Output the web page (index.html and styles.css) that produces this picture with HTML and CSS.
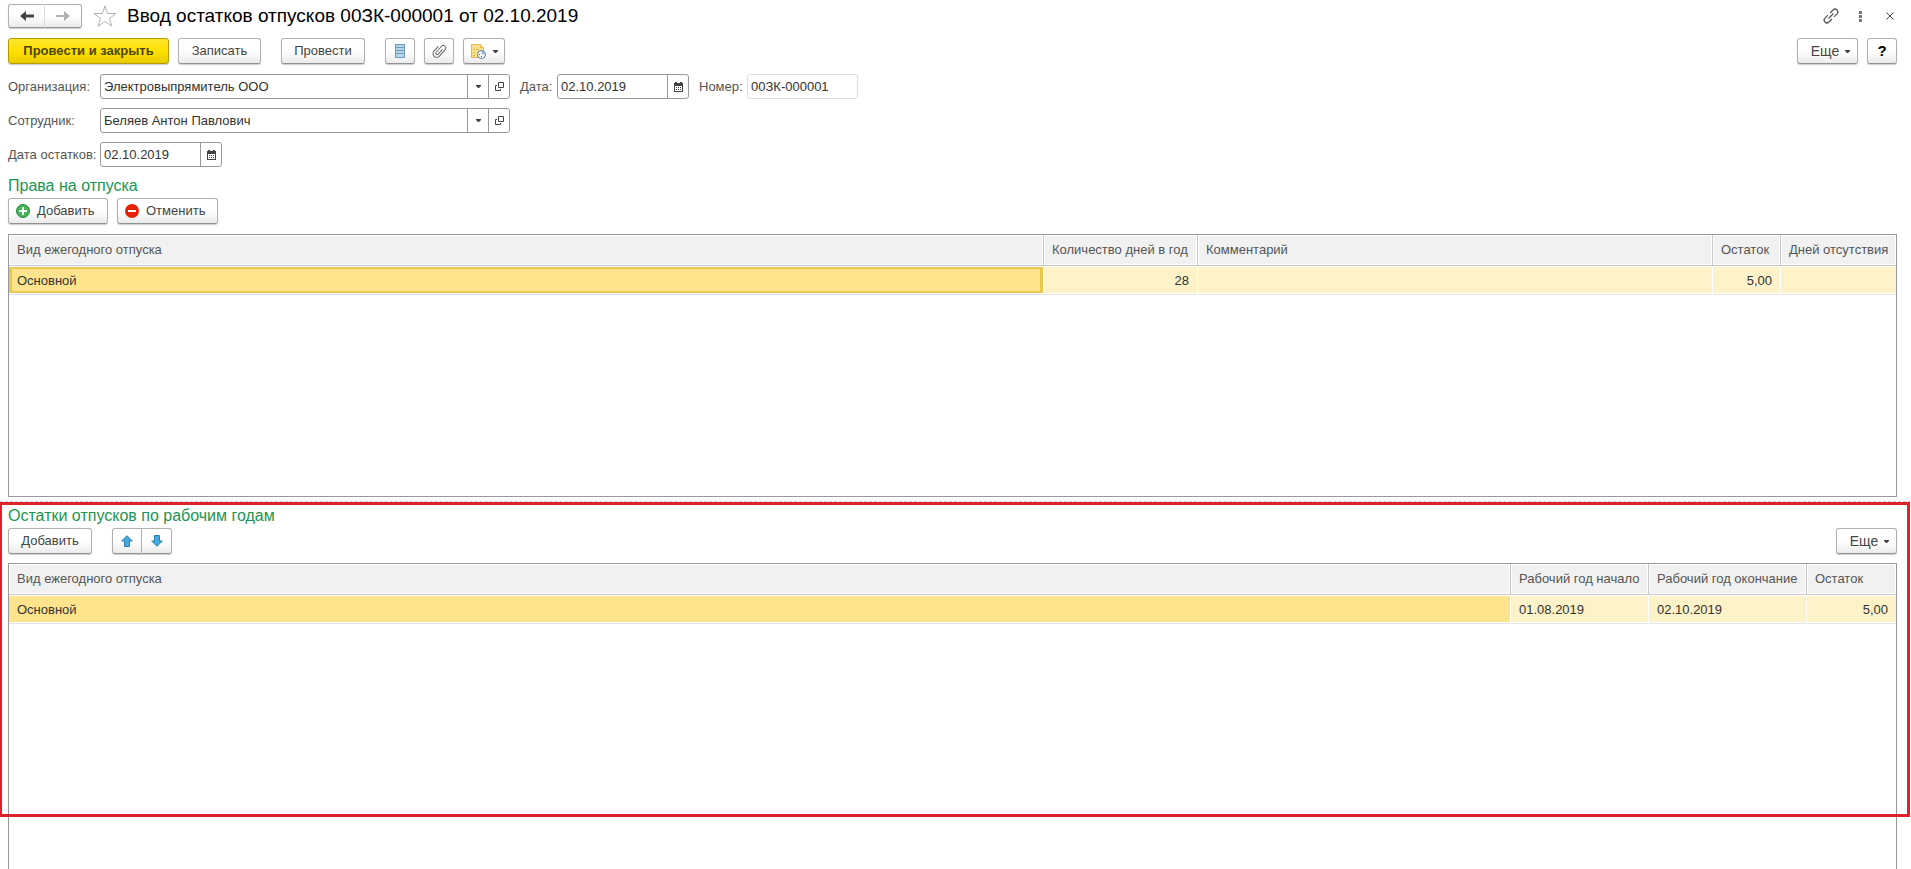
FILE: index.html
```html
<!DOCTYPE html>
<html lang="ru">
<head>
<meta charset="utf-8">
<title>Ввод остатков отпусков</title>
<link rel="stylesheet" href="styles.css">
</head>
<body>
<svg class="defs" aria-hidden="true">
  <symbol id="calendar" viewBox="0 0 9 10"><path d="M0 1h9v9H0z" fill="#444"/><path d="M1 4h7v5H1z" fill="#fff"/><path d="M1 0h2v2H1zM6 0h2v2H6z" fill="#444"/><path d="M2 5h1v1H2zM4 5h1v1H4zM6 5h1v1H6zM2 7h1v1H2zM4 7h1v1H4zM6 7h1v1H6z" fill="#444"/></symbol>
  <symbol id="open" viewBox="0 0 9 9"><path d="M3.500 .5h5v5h-5zM2 3.500H.5v5h5V7" fill="none" stroke="#444"/></symbol>
  <symbol id="caret" viewBox="0 0 5 3"><path d="M0 0h5v1L3 3H2L0 1z" fill="#444"/></symbol>
</svg>

<header class="titlebar">
  <div class="group">
    <button class="btn nav" aria-label="Назад"><svg width="14" height="10" viewBox="0 0 14 10"><path d="M6 0L0 5l6 5V6.500h8v-3H6z" fill="#444"/></svg></button>
    <button class="btn nav" aria-label="Вперед"><svg width="14" height="10" viewBox="0 0 14 10"><path d="M8 0l6 5-6 5V6H0V4h8z" fill="#b0b0b0"/></svg></button>
  </div>
  <button class="plain star" aria-label="Избранное"><svg width="24" height="22" viewBox="0 0 24 22"><path d="M12 1l2.700 7.500H23l-6.600 5 2.500 7.700-6.900-4.700-6.900 4.700 2.500-7.700L1 8.500h8.300z" fill="#fff" stroke="#aeb3b8"/></svg></button>
  <h1>Ввод остатков отпусков 00ЗК-000001 от 02.10.2019</h1>
  <div class="window-tools">
    <button class="plain" aria-label="Ссылка"><svg width="16" height="16" viewBox="0 0 16 16"><g transform="rotate(-45 8 8)" fill="none" stroke="#555" stroke-width="1.200"><path d="M6.500 5.200H2.300a2.800 2.800 0 0 0 0 5.600h4.200M9.500 5.200h4.200a2.800 2.800 0 0 1 0 5.600H9.500M4.500 8h7"/></g></svg></button>
    <button class="plain" aria-label="Меню"><svg width="3" height="11" viewBox="0 0 3 11"><path d="M0 0h3v3H0zM0 4h3v3H0zM0 8h3v3H0z" fill="#777"/></svg></button>
    <button class="plain" aria-label="Закрыть"><svg width="8" height="8" viewBox="0 0 8 8"><path d="M.5.5l7 7M7.500.5l-7 7" stroke="#444"/></svg></button>
  </div>
</header>

<div class="toolbar main-tools">
  <button class="btn primary">Провести и закрыть</button>
  <button class="btn save">Записать</button>
  <button class="btn post">Провести</button>
  <button class="btn icon" aria-label="Список"><svg width="10" height="14" viewBox="0 0 10 14"><path d="M0 0h10v14H0z" fill="#6f9ab8"/><path d="M1 1h8v2H1zM1 4h8v2H1zM1 7h8v2H1zM1 10h8v3H1z" fill="#b5d7ec"/></svg></button>
  <button class="btn icon" aria-label="Файлы"><svg width="14" height="14" viewBox="0 0 14 14"><g transform="rotate(42 7 7)" fill="none" stroke="#666"><path d="M8.500 3.500v6.300a1.400 1.400 0 0 1-2.800 0V1.800a2.500 2.500 0 0 1 5 0v8.700a3.700 3.700 0 0 1-7.400 0V4"/></g></svg></button>
  <button class="btn reminder" aria-label="Напоминание">
    <svg width="15" height="15" viewBox="0 0 15 15"><path d="M.5.5h9l3 3v10H.5z" fill="#f8e08c" stroke="#dfb955"/><path d="M9.500.5v3h3" fill="#fff1b5" stroke="#dfb955"/><path d="M2 5.500h2M5 5.500h3M2 8.500h2M2 11.500h2" stroke="#d9b65c"/><circle cx="10.500" cy="10.500" r="4" fill="#fff" stroke="#5f7592"/><path d="M10.500 10.500V7a3.500 3.500 0 0 1 3.500 3.500z" fill="#8dbbe2"/><path d="M8 10.500h1M10.500 12v1" stroke="#555"/></svg>
    <svg width="5" height="3"><use href="#caret"/></svg>
  </button>
  <button class="btn more push">Еще <svg width="5" height="3"><use href="#caret"/></svg></button>
  <button class="btn icon help">?</button>
</div>

<form class="fields">
  <div class="row">
    <label class="first" for="org">Организация:</label>
    <div class="field wide"><input id="org" value="Электровыпрямитель ООО"><button type="button" aria-label="Выбрать"><svg width="5" height="3"><use href="#caret"/></svg></button><button type="button" aria-label="Открыть"><svg width="9" height="9"><use href="#open"/></svg></button></div>
    <label class="date-label" for="date">Дата:</label>
    <div class="field date"><input id="date" value="02.10.2019"><button type="button" aria-label="Календарь"><svg width="9" height="10"><use href="#calendar"/></svg></button></div>
    <label class="number-label" for="number">Номер:</label>
    <div class="field number"><input id="number" value="00ЗК-000001" readonly></div>
  </div>
  <div class="row">
    <label class="first" for="person">Сотрудник:</label>
    <div class="field wide"><input id="person" value="Беляев Антон Павлович"><button type="button" aria-label="Выбрать"><svg width="5" height="3"><use href="#caret"/></svg></button><button type="button" aria-label="Открыть"><svg width="9" height="9"><use href="#open"/></svg></button></div>
  </div>
  <div class="row">
    <label class="first" for="rest">Дата остатков:</label>
    <div class="field rest"><input id="rest" value="02.10.2019"><button type="button" aria-label="Календарь"><svg width="9" height="10"><use href="#calendar"/></svg></button></div>
  </div>
</form>

<section class="rights">
  <h2>Права на отпуска</h2>
  <div class="toolbar">
    <button class="btn add"><svg width="14" height="14" viewBox="0 0 14 14"><circle cx="7" cy="7" r="6.500" fill="#45b45a" stroke="#278b3c"/><path d="M7 3v8M3 7h8" stroke="#fff" stroke-width="2"/></svg>Добавить</button>
    <button class="btn cancel"><svg width="14" height="14" viewBox="0 0 14 14"><circle cx="7" cy="7" r="7" fill="#e52207"/><path d="M3 7h8" stroke="#fff" stroke-width="2"/></svg>Отменить</button>
  </div>
  <div class="grid">
    <table>
      <colgroup><col><col class="c-days"><col class="c-comment"><col class="c-left"><col class="c-absence"></colgroup>
      <thead><tr><th>Вид ежегодного отпуска</th><th>Количество дней в год</th><th>Комментарий</th><th>Остаток</th><th>Дней отсутствия</th></tr></thead>
      <tbody><tr><td class="current focused">Основной</td><td class="num">28</td><td></td><td class="num">5,00</td><td></td></tr></tbody>
    </table>
  </div>
</section>

<section class="years">
  <h2>Остатки отпусков по рабочим годам</h2>
  <div class="toolbar">
    <button class="btn add-year">Добавить</button>
    <div class="group">
      <button class="btn move" aria-label="Вверх"><svg width="12" height="12" viewBox="0 0 12 12"><path d="M6 .7L11.300 6H8.500v5.500h-5V6H.7z" fill="#45a9e2" stroke="#2f7dad"/></svg></button>
      <button class="btn move" aria-label="Вниз"><svg width="12" height="12" viewBox="0 0 12 12"><path d="M6 11.300L.7 6h2.800V.5h5V6h2.800z" fill="#45a9e2" stroke="#2f7dad"/></svg></button>
    </div>
    <button class="btn more push">Еще <svg width="5" height="3"><use href="#caret"/></svg></button>
  </div>
  <div class="grid">
    <table>
      <colgroup><col><col class="c-start"><col class="c-end"><col class="c-rest"></colgroup>
      <thead><tr><th>Вид ежегодного отпуска</th><th>Рабочий год начало</th><th>Рабочий год окончание</th><th>Остаток</th></tr></thead>
      <tbody><tr><td class="current">Основной</td><td>01.08.2019</td><td>02.10.2019</td><td class="num">5,00</td></tr></tbody>
    </table>
  </div>
  <div class="highlight"></div>
</section>
</body>
</html>
```
FILE: styles.css
```css
* { box-sizing: border-box; }
body {
  margin: 0;
  height: 100vh;
  overflow: hidden;
  display: flex;
  flex-direction: column;
  background: #fff;
  color: #333;
  font: 13px/16px "Liberation Sans", Arial, sans-serif;
}
button, input { font: inherit; color: inherit; }
svg { display: block; flex: none; overflow: visible; }
.defs { position: absolute; width: 0; height: 0; }

.titlebar, .main-tools, .fields { padding: 0 14px 0 8px; }
.titlebar { display: flex; align-items: center; height: 32px; }
h1 { margin: 0 0 0 10px; font-size: 19px; line-height: 24px; font-weight: 400; color: #000; }
.plain { display: flex; padding: 0; border: 0; background: none; }
.star { margin-left: 11px; }
.window-tools { display: flex; align-items: center; gap: 20px; margin-left: auto; padding-right: 3px; }
.window-tools .plain:last-child { margin-left: 4px; }

.btn {
  display: flex;
  align-items: center;
  justify-content: center;
  height: 26px;
  padding: 0;
  border: 1px solid #b0b0b0;
  border-bottom-color: #929292;
  border-radius: 3px;
  background: linear-gradient(#fff 50%, #ebebeb);
  box-shadow: 0 1px 1px #ccc;
  color: #444;
  white-space: nowrap;
}
.group { display: flex; }
.group .btn:first-child { border-radius: 3px 0 0 3px; }
.group .btn:last-child { border-radius: 0 3px 3px 0; border-left: 0; }
.nav { width: 37px; height: 24px; }
.group .nav:first-child { border-right-color: #ddd; }
.toolbar { display: flex; }
.main-tools { padding-top: 6px; }
.primary {
  width: 161px;
  border-color: #b59b00;
  background: linear-gradient(#ffe72e, #ffe000 50%, #e9cc00);
  color: #4d4500;
  font-weight: 700;
}
.save { width: 83px; margin-left: 9px; }
.post { width: 84px; margin-left: 20px; }
.icon { width: 30px; margin-left: 9px; }
.post + .icon { margin-left: 20px; }
.reminder { width: 42px; margin-left: 9px; gap: 7px; }
.more { width: 61px; gap: 6px; padding-left: 6px; font-size: 14px; }
.push { margin-left: auto; }
.help { color: #000; font-size: 15px; font-weight: 700; }

.fields { display: flex; flex-direction: column; gap: 9px; padding-top: 10px; }
.row { display: flex; align-items: center; }
label { color: #555; white-space: nowrap; }
.first { width: 92px; }
.field { display: flex; height: 25px; border: 1px solid #999; border-radius: 3px; overflow: hidden; }
.field input { flex: 1; min-width: 0; padding: 0 3px; border: 0; outline: 0; background: none; }
.field button {
  display: flex;
  align-items: center;
  justify-content: center;
  width: 21px;
  padding: 0;
  border: 0;
  border-left: 1px solid #999;
  background: none;
}
.wide { width: 410px; }
.date { width: 132px; }
.rest { width: 122px; }
.number { width: 111px; border-color: #ddd; }
.date-label { width: 37px; margin-left: 10px; }
.number-label { width: 48px; margin-left: 10px; }

h2 { margin: 0; font-size: 16px; line-height: 20px; font-weight: 400; color: #1a9650; }
.rights { flex: none; padding: 9px 14px 4px 8px; }
.rights h2 { padding-bottom: 2px; }
.add, .cancel { justify-content: flex-start; gap: 7px; padding-left: 7px; }
.add { width: 100px; }
.cancel { width: 101px; margin-left: 9px; }
.add-year { width: 84px; }
.add-year + .group { margin-left: 20px; }
.move { width: 30px; }

.grid { margin-top: 10px; border: 1px solid #999; }
.rights .grid { height: 263px; }
table { width: 100%; table-layout: fixed; border-collapse: separate; border-spacing: 0; }
th, td { padding: 0 8px; text-align: left; font-weight: 400; white-space: nowrap; }
th {
  height: 31px;
  border-right: 1px solid #c8c8c8;
  border-bottom: 1px solid #c8c8c8;
  background: #f1f1f1;
  box-shadow: inset 0 0 0 1px #fff;
  color: #555;
}
td {
  height: 29px;
  padding-top: 1px;
  border-right: 1px solid #fff;
  border-bottom: 1px solid #e4e4e4;
  background: #fdf2c8;
  box-shadow: inset 0 1px #fff, inset 0 -1px #fff;
}
th:last-child, td:last-child { border-right: 0; }
.current { background: #ffe48d; }
.focused { box-shadow: inset 0 1px #fff, inset 0 -1px #fff, inset 0 0 0 3px #e8c94d; }
.num { text-align: right; }
.c-days { width: 154px; }
.c-comment { width: 515px; }
.c-left { width: 68px; }
.c-absence { width: 115px; }
.c-start { width: 138px; }
.c-end { width: 158px; }
.c-rest { width: 89px; }

.years {
  position: relative;
  flex: 1;
  min-height: 0;
  display: flex;
  flex-direction: column;
  padding: 4px 14px 0 8px;
  border-top: 1px dashed #ccc;
}
.years h2 { padding: 0; height: 22px; line-height: 20px; }
.years .grid { flex: 1; margin-top: 9px; border-bottom: 0; }
.highlight {
  position: absolute;
  inset: 0 1px 52px 0;
  border: 3px solid #dc232c;
  border-left-width: 2px;
  pointer-events: none;
}
```
